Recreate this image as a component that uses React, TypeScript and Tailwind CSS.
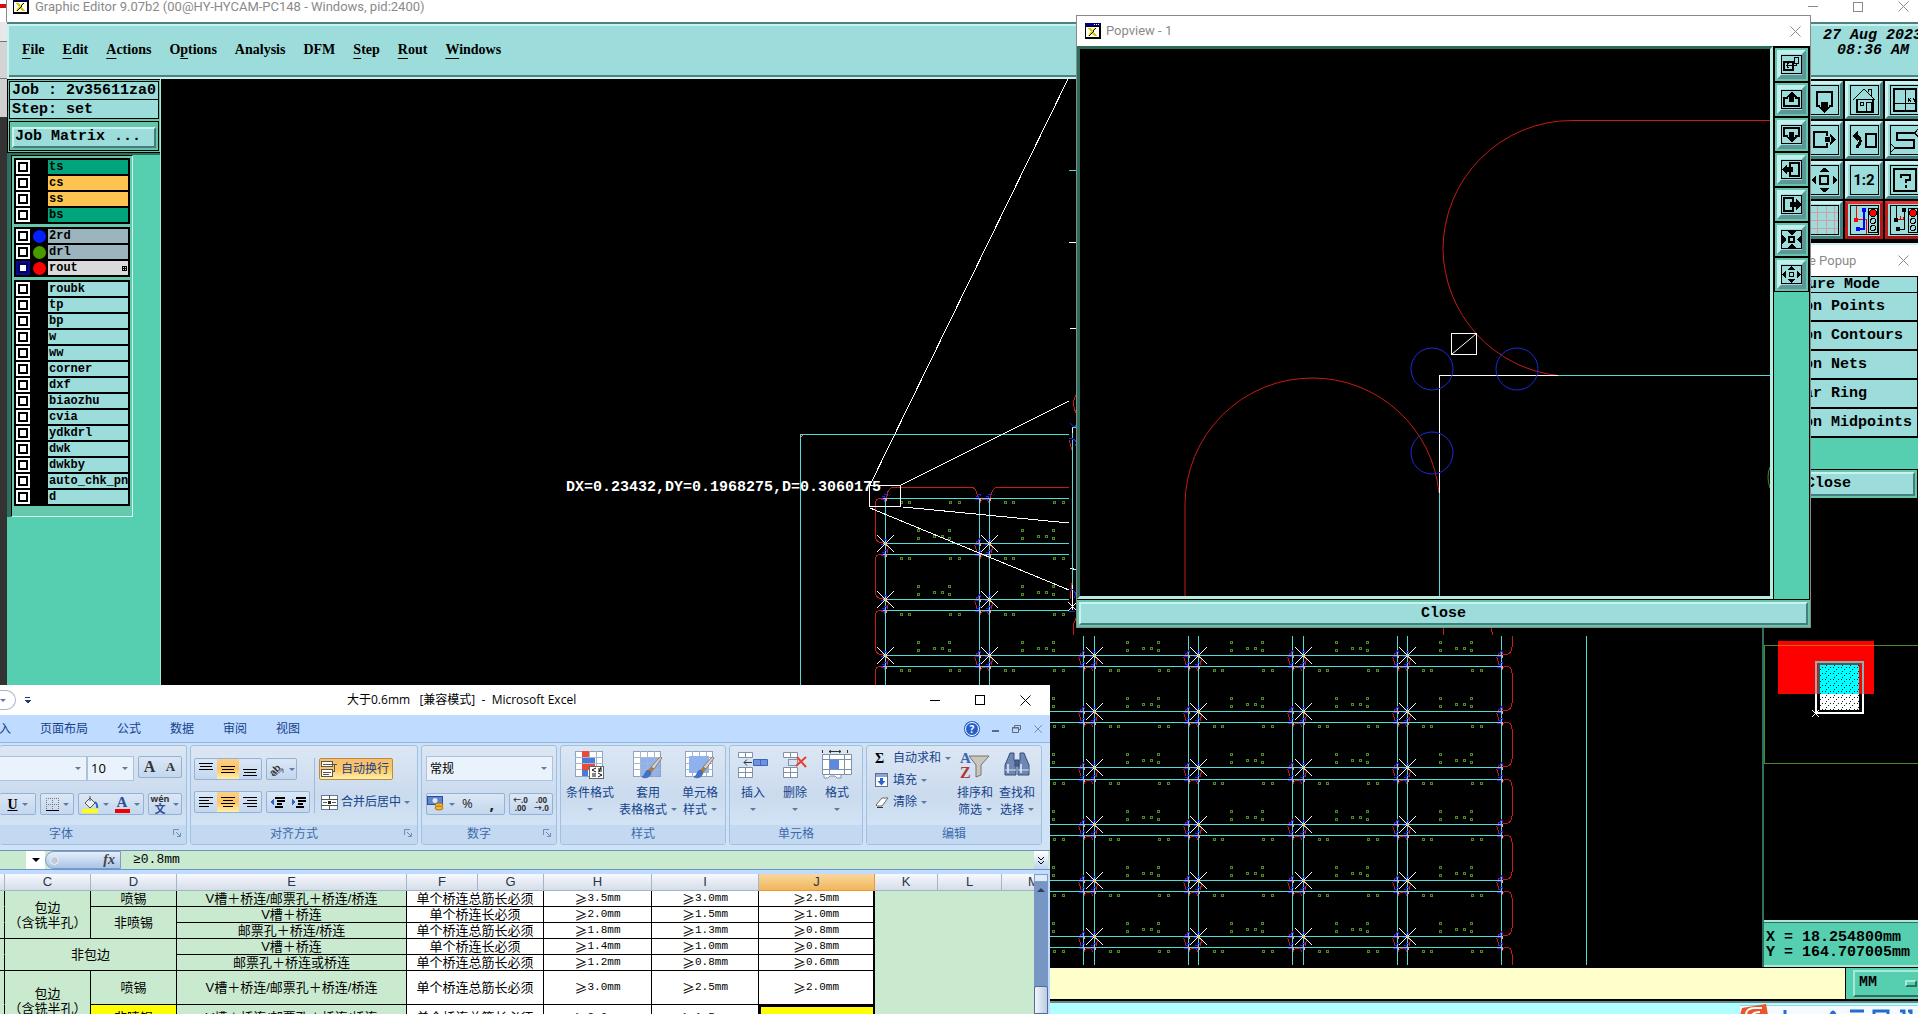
import React, { useState } from 'react';

const MONO = "font-['Liberation_Mono','Noto_Sans_CJK_SC',monospace]";
const UI = "font-['Open_Sans','Noto_Sans_CJK_SC',sans-serif]";
const TITLE = "font-['Roboto','Noto_Sans_CJK_SC',sans-serif]";

/* ---------------------------------------------------------------- data */

const menus = [
  { label: 'File', key: 0 },
  { label: 'Edit', key: 0 },
  { label: 'Actions', key: 0 },
  { label: 'Options', key: 1 },
  { label: 'Analysis', key: -1 },
  { label: 'DFM', key: -1 },
  { label: 'Step', key: 0 },
  { label: 'Rout', key: 0 },
  { label: 'Windows', key: 0 },
];

type Layer = { name: string; bg: string; dot?: string; active?: boolean };

const layerGroups: Layer[][] = [
  [
    { name: 'ts', bg: 'bg-[#00a57d]' },
    { name: 'cs', bg: 'bg-[#fdc54f]' },
    { name: 'ss', bg: 'bg-[#fdc54f]' },
    { name: 'bs', bg: 'bg-[#00a57d]' },
  ],
  [
    { name: '2rd', bg: 'bg-[#9cb4bd]', dot: 'bg-[#0020ff]' },
    { name: 'drl', bg: 'bg-[#9cb4bd]', dot: 'bg-[#479a00]' },
    { name: 'rout', bg: 'bg-[#dadada]', dot: 'bg-[#ff0000]', active: true },
  ],
  ['roubk', 'tp', 'bp', 'w', 'ww', 'corner', 'dxf', 'biaozhu', 'cvia', 'ydkdrl', 'dwk', 'dwkby', 'auto_chk_pnl', 'd'].map(
    (name) => ({ name, bg: 'bg-[#9cdcda]' })
  ),
];

/* ---------------------------------------------------------------- canvas */

const colX = [885, 989, 1094, 1198, 1303, 1407];
const rowY = [0, 1, 2, 3, 4, 5, 6, 7, 8].map((k) => Math.floor(498.5 + 56.1 * k));
const pads = [
  [15, 4], [23, 4], [64, 4], [73, 4],
  [32, 32], [32, 40], [48, 38], [56, 38], [63, 32], [63, 40],
];

const Corner: React.FC<{ x: number; y: number }> = ({ x, y }) => (
  <g>
    <path d={`M${x - 3} ${y - 2}h2v3M${x + 1} ${y - 2}v-2h-2M${x - 4} ${y + 1}h4`} stroke="#2020ff" />
    <path d={`M${x - 2} ${y}h3v3`} stroke="#f2a0a0" />
  </g>
);

const Panel: React.FC = () => (
  <g fill="none" strokeWidth="1">
    {rowY.map((y) => (
      <g key={y}>
        <path d={`M885 ${y}.5H1501`} stroke="#4fdcd9" />
        {y < 940 && <path d={`M885 ${y + 45}.5H1501`} stroke="#4fdcd9" />}
        {/* rounded rout on both sides of the array */}
        <path d={`M885 ${y + 4}c-1-6-10-5-10 3v30c0 8 8 9 10 6`} stroke="#c41c18" />
        <path d={`M1502 ${y + 4}c1-6 10-5 10 3v30c0 8-8 9-10 6`} stroke="#c41c18" />
      </g>
    ))}
    {colX.map((x) => (
      <g key={x}>
        <path d={`M${x}.5 498V965M${x + 94}.5 498V965`} stroke="#4fdcd9" />
        <path d={`M${x + 2} 498c-1-6 3-11 8-11h75c5 0 8 5 7 11`} stroke="#c41c18" />
        {rowY.map((y) => (
          <g key={y}>
            {pads.map(([dx, dy]) =>
              y + dy < 960 ? <rect key={`${dx}-${dy}`} x={x + dx} y={y + dy - 1} width="2" height="2" stroke="#4d8a25" /> : null
            )}
            <Corner x={x} y={y} />
            <Corner x={x + 94} y={y} />
            {x < 1400 && <path d={`M${x + 95} ${y + 5}c2-5 7-5 9 0`} stroke="#c41c18" />}
            {y < 940 && (
              <>
                <path d={`M${x + 93} ${y + 46}c-7 0 0 4-2 8M${x + 1} ${y + 46}c4 2 2 6 1 9M${x + 95} ${y + 40}c-1 4-4 4-4 5`} stroke="#c41c18" />
                <Corner x={x} y={y + 45} />
                <Corner x={x + 94} y={y + 45} />
                <path d={`M${x - 8} ${y + 37}l17 17M${x + 9} ${y + 37}l-17 17`} stroke="#fff" />
                <rect x={x} y={y + 45} width="1" height="1" stroke="#ffd24a" />
              </>
            )}
          </g>
        ))}
      </g>
    ))}
  </g>
);

const BoardCanvas: React.FC = () => (
  <svg className="absolute inset-0 w-full h-full" shapeRendering="crispEdges">
    <defs>
      <clipPath id="redrawn">
        <path d="M161 79H1069V636H1763V965H161Z" />
      </clipPath>
    </defs>
    <g transform="translate(-161 -79)" fill="none">
      <g clipPath="url(#redrawn)">
        <path d="M800.500 686V434.500H1586.500V965" stroke="#4fdcd9" />
        <path d="M800 438l4-4" stroke="#ff7a6a" />
        <Panel />
      </g>
      {/* measuring rubber band */}
      <g stroke="#fff">
        <path d="M870 485L1068 79M901 485L1069 401M903 507L1069 523M870 508L1069 590" />
        <rect x="869.500" y="485.500" width="31" height="21" />
        <path d="M1070 568l7 2M1069 243l7-1M1070 328h6M1072.500 427V433M1072.500 585V610M1068 602l9 9M1077 602l-9 9" />
      </g>
      <path d="M1072.500 433V585M1069 170.500h7M1072 427.500h4" stroke="#4fdcd9" />
      <path d="M1076 395q-5 8 0 18M1069 440l3 10M1072 583l-2 16M1076 618q-4 8-2 17M1443 628v7M1491 628l2 7" stroke="#c41c18" />
      <path d="M1070 423q5 6 6 2M1069 438q10 2 6 8M1070 588q8 4 4 10M1069 611h6" stroke="#1c2be0" />
      <text
        x="566"
        y="491"
        fill="#fff"
        fontWeight="700"
        fontSize="15"
        className={MONO}
      >
        DX=0.23432,DY=0.1968275,D=0.3060175
      </text>
    </g>
  </svg>
);

/* ---------------------------------------------------------------- tool icons */

const icons: Record<string, React.ReactNode> = {
  panes: (
    <>
      <rect x="3" y="7" width="9" height="8" strokeWidth="2" />
      <path d="M5 10.500h9M7.500 8l-2 2.500 2 2.500M13.500 2.500h4v6h-4zM12 10.500h3v-2" />
    </>
  ),
  up: (
    <>
      <path d="M7 8H3v8h15V8h-4" strokeWidth="2" />
      <path d="M5 7h11l-5-5h-1zM8 7h5v5H8z" fill="#000" stroke="none" />
    </>
  ),
  down: (
    <>
      <path d="M7 11H3V3h15v8h-4" strokeWidth="2" />
      <path d="M5 12h11l-5 5h-1zM8 7h5v5H8z" fill="#000" stroke="none" />
    </>
  ),
  left: (
    <>
      <path d="M9 7V3h9v13H9v-4" strokeWidth="2" />
      <path d="M6 4v11L1 10V9zM6 7h6v5H6z" fill="#000" stroke="none" />
    </>
  ),
  right: (
    <>
      <path d="M12 7V3H3v13h9v-4" strokeWidth="2" />
      <path d="M15 4v11l5-5V9zM9 7h6v5H9z" fill="#000" stroke="none" />
    </>
  ),
  shrink: (
    <>
      <rect x="8" y="7" width="5" height="5" strokeWidth="2" />
      <path d="M6 1h9l-4 4h-1zM6 18h9l-4-4h-1zM1 5v9l4-4V9zM20 5v9l-4-4V9z" fill="#000" stroke="none" />
    </>
  ),
  grow: (
    <>
      <rect x="8.500" y="7.500" width="4" height="4" />
      <path d="M7 5h7l-3-4h-1zM7 14h7l-3 4h-1zM5 6v7l-4-3V9zM16 6v7l4-3V9z" fill="#000" stroke="none" />
    </>
  ),
};

const light = (x: number) => (
  <>
    <rect x={x + 0.5} y="3.500" width="9" height="24" />
    <circle cx={x + 5} cy="8" r="3.500" fill="#f00" />
    <circle cx={x + 5} cy="16" r="2.500" />
    <circle cx={x + 5} cy="23" r="2.500" />
  </>
);

const bigIcons: Record<string, React.ReactNode> = {
  down: (
    <>
      <path d="M10 21H7V7h15v14h-3" strokeWidth="2" />
      <path d="M9 22h11l-5 6h-1zM11 17h7v5h-7z" fill="#000" stroke="none" />
    </>
  ),
  house: (
    <>
      <path d="M3 15L14 4l11 11M18.500 7V4h3v7M20 1l3-2" />
      <path d="M6 14.500h18M10.500 17.500h3v3h-3zM16.500 17.500h5v9h-5z" />
      <path d="M7 14v13h16V14" strokeWidth="2" />
    </>
  ),
  xy: (
    <>
      <rect x="4" y="4" width="22" height="22" strokeWidth="2" />
      <path d="M15.500 4v22M4 18.500h22M18 13l3 4M21 13l-3 4M23 13l1.500 2 1.500-2M24.500 15v2" />
    </>
  ),
  right: (
    <>
      <path d="M17 11V7H4v15h13v-4" strokeWidth="2" />
      <path d="M20 9v11l6-5v-1zM15 12h6v5h-6z" fill="#000" stroke="none" />
    </>
  ),
  undo: (
    <>
      <rect x="16" y="9" width="10" height="13" strokeWidth="2" />
      <path d="M4 11h3q6 4 1 10H6" strokeWidth="3" />
      <path d="M2 11l6-5v10z" fill="#000" stroke="none" />
    </>
  ),
  snake: (
    <>
      <path d="M25 8H7v7h17v8H5" strokeWidth="2" />
      <path d="M28 4l-3 4 3 4M1 19l4 4-4 4" />
    </>
  ),
  pan: (
    <>
      <rect x="10" y="11" width="8" height="8" strokeWidth="2" />
      <path d="M9 7h11l-5-4h-1zM9 23h11l-5 4h-1zM6 10v10l-4-5zM23 10v10l4-5z" fill="#000" stroke="none" />
    </>
  ),
  help: (
    <>
      <rect x="4" y="4" width="22" height="22" strokeWidth="2" />
      <path d="M11 13v-3h9v5h-4v3M16 20v3" strokeWidth="2" />
    </>
  ),
  grid: <path d="M7.500 1v28M16.500 1v28M24.500 1v28M1 7.500h27M1 15.500h27M1 23.500h27" stroke="#d99aa0" />,
  netRed: (
    <>
      <path d="M6.500 1v14M6 14.500h10V29" stroke="#f00" />
      <path d="M14 6v18H8" stroke="#00f" strokeWidth="2" />
      <circle cx="6" cy="15" r="2" fill="#f00" stroke="#f00" />
      <circle cx="14" cy="5" r="2" fill="#00f" stroke="#00f" />
      <circle cx="8" cy="24" r="2" fill="#00f" stroke="#00f" />
      {light(18)}
    </>
  ),
  netBlack: (
    <>
      <path d="M6.500 1v14M14.500 6v18H8" />
      <path d="M8 14.500h5v-3M10.500 14v-3" stroke="#d00" />
      <circle cx="6" cy="15" r="2" fill="#000" />
      <circle cx="14" cy="5" r="2" fill="#000" />
      <circle cx="8" cy="24" r="2" fill="#000" />
      {light(18)}
    </>
  ),
};

const bevel = 'border-2 border-t-[#c8f3f1] border-l-[#c8f3f1] border-b-[#447f80] border-r-[#447f80] bg-[#9cdcda]';

const SmallTool: React.FC<{ icon: string }> = ({ icon }) => (
  <div className="h-[33px] bg-[#66c4ab] p-[2px]">
    <button aria-label={icon} className="w-full h-full border-4 border-t-[#c0f0ee] border-l-[#c0f0ee] border-b-[#5d9698] border-r-[#5d9698] bg-[#9cdcda] flex items-center justify-center">
      <svg width="21" height="19" viewBox="0 0 21 19" fill="none" stroke="#000" shapeRendering="crispEdges" className="shrink-0">
        <rect x="0.500" y="0.500" width="20" height="18" />
        {icons[icon]}
      </svg>
    </button>
  </div>
);

const BigTool: React.FC<{ icon: string }> = ({ icon }) => {
  const red = icon.startsWith('net');
  return (
    <button
      aria-label={icon}
      className={`w-[38px] h-[38px] shrink-0 border-[3px] flex items-center justify-center bg-[#9cdcda] ${
        red ? 'border-t-[#e23434] border-l-[#c01c1c] border-b-[#a81414] border-r-[#b01818]' : 'border-t-[#c8f3f1] border-l-[#c8f3f1] border-b-[#447f80] border-r-[#447f80]'
      }`}
    >
      {icon === 'ratio' ? (
        <span className="w-[29px] h-[30px] border border-black flex items-center justify-center font-['Roboto',sans-serif] font-bold text-[15px]">1:2</span>
      ) : (
        <svg width="29" height="30" viewBox="0 0 29 30" fill="none" stroke="#000" shapeRendering="crispEdges" className="shrink-0">
          <rect x="0.500" y="0.500" width="28" height="29" />
          {bigIcons[icon]}
        </svg>
      )}
    </button>
  );
};

const XIcon: React.FC = () => (
  <svg width="16" height="16" viewBox="0 0 16 16" className="shrink-0" shapeRendering="crispEdges">
    <rect width="16" height="16" fill="#000" />
    <rect x="1" y="4" width="13" height="10" fill="#fff" />
    <rect x="0" y="0" width="15" height="3" fill="#000080" />
    <path d="M9 1.500h1M11 1.500h1M13 1.500h1" stroke="#fff" />
    <path d="M4 5l7 8" stroke="#d8c800" strokeWidth="2" />
    <path d="M11 5l-7 8" stroke="#111" />
    <path d="M10 5l-7 8" stroke="#e8e000" />
  </svg>
);

const Cross: React.FC<{ size?: number; color?: string }> = ({ size = 11, color = '#8a8a8a' }) => (
  <svg width={size} height={size} viewBox="0 0 11 11" stroke={color} fill="none">
    <path d="M0.500 0.500l10 10M10.500 0.500l-10 10" />
  </svg>
);

/* ---------------------------------------------------------------- side bar */

const LayerRow: React.FC<{ layer: Layer }> = ({ layer }) => (
  <label className="flex h-[14px]">
    <input
      type="checkbox"
      aria-label={layer.name}
      className={`appearance-none w-[14px] h-[14px] shrink-0 border-2 bg-white ${
        layer.active ? 'border-[#0a0a90] shadow-[inset_0_0_0_2px_#00006a]' : 'border-white shadow-[inset_0_0_0_2px_#000]'
      }`}
    />
    <span className="w-[18px] shrink-0 flex items-center justify-center">
      {layer.dot && <span className={`w-[13px] h-[13px] rounded-full ${layer.dot}`} />}
    </span>
    <span className={`flex-1 min-w-0 overflow-hidden flex justify-between items-center px-px text-[12px] leading-[14px] font-bold ${layer.bg}`}>
      {layer.name}
      {layer.active && (
        <svg width="5" height="5" viewBox="0 0 5 5" shapeRendering="crispEdges">
          <path d="M0.500 0.500h4v4h-4zM2.500 0v5M0 2.500h5" stroke="#000" fill="none" />
        </svg>
      )}
    </span>
  </label>
);

const SideBar: React.FC = () => (
  <aside className={`w-[154px] shrink-0 bg-[#56cfb0] border-r border-[#a8e8d8] ${MONO}`}>
    <div className="bg-[#66c4ab] border-y border-l border-black p-px flex flex-col gap-[2px]">
      <div className="border border-black bg-[#9cdcda] text-[15px] font-bold">
        <div className="h-[18px] leading-[18px] px-[2px] border-b border-black whitespace-nowrap">Job : 2v35611za0</div>
        <div className="h-[18px] leading-[19px] px-[2px]">Step: set</div>
      </div>
      <div className="border border-black p-[2px]">
        <button className={`w-full h-[21px] text-left leading-4 px-[1px] text-[15px] font-bold ${bevel}`}>Job Matrix ...</button>
      </div>
    </div>
    <div className="border-l-4 border-t-2 border-[#2c7060] pr-[27px]">
      <div className="border border-black border-r-[#c8fff0] border-b-[#c8fff0] bg-[#66c9ae] p-[2px] pb-[10px] flex flex-col gap-[3px]">
        {layerGroups.map((group, i) => (
          <div key={i} className="bg-black p-[2px] flex flex-col gap-[2px]">
            {group.map((layer) => (
              <LayerRow key={layer.name} layer={layer} />
            ))}
          </div>
        ))}
      </div>
    </div>
  </aside>
);

/* ---------------------------------------------------------------- right column */

const Overview: React.FC = () => (
  <svg className="w-full flex-1 min-h-0" shapeRendering="crispEdges">
    <defs>
      <pattern id="dots" width="8" height="6" patternUnits="userSpaceOnUse">
        <path d="M1 1.500h1M4 3.500h1M6 1.500h1M2 5.500h1" stroke="#023" />
      </pattern>
    </defs>
    <g transform="translate(-1764 -245)" fill="none">
      <rect x="1764.500" y="645.500" width="200" height="118" stroke="#4d8a25" />
      <rect x="1778" y="641" width="96" height="53" fill="#f00" />
      <path d="M1778 645.500h96" stroke="#c56a10" />
      <rect x="1816" y="662" width="47" height="51" stroke="#fff" strokeWidth="2" />
      <path d="M1816 694V662H1863V694" stroke="#8fb0b0" strokeWidth="2" />
      <path d="M1818 664h43M1818.500 664v30" stroke="#555" strokeWidth="2" />
      <rect x="1820" y="665" width="39" height="29" fill="#0ff" />
      <rect x="1820" y="694" width="39" height="16" fill="#fff" />
      <rect x="1820" y="665" width="39" height="45" fill="url(#dots)" />
      <path d="M1812 710l7 7M1819 710l-7 7" stroke="#fff" />
    </g>
  </svg>
);

const tools = ['down', 'house', 'xy', 'right', 'undo', 'snake', 'pan', 'ratio', 'help', 'grid', 'netRed', 'netBlack'];

const RightPanel: React.FC = () => (
  <aside className={`w-[156px] shrink-0 overflow-hidden bg-black border-l-2 border-[#2c7060] flex flex-col ${MONO}`}>
    <div className="h-[166px] pt-[2px] pl-[41px] border-b-2 border-[#c8f3f1]">
      <div className="w-[118px] grid grid-cols-3 gap-[2px]">
        {tools.map((t) => (
          <BigTool key={t} icon={t} />
        ))}
      </div>
    </div>
    <Overview />
    <div className="h-[47px] shrink-0 border-t-2 border-b-2 border-[#a8e8d8] bg-[#56cfb0] shadow-[inset_0_1px_0_#2c7060] pt-2 pl-[2px] text-[15px] leading-[15px] font-bold whitespace-pre">
      <div>X = 18.254800mm</div>
      <div>Y = 164.707005mm</div>
    </div>
  </aside>
);

/* ---------------------------------------------------------------- popups */

const FeaturePopup: React.FC = () => (
  <section className={`absolute left-[1800px] right-0 top-[245px] bg-[#56cfb0] ${MONO} text-[15px] font-bold`}>
    <header className={`h-[31px] bg-white flex items-center justify-between pl-[9px] pr-[9px] text-[13px] font-normal text-[#8a8a8a] ${TITLE}`}>
      <span>e Popup</span>
      <button aria-label="Close popup">
        <Cross />
      </button>
    </header>
    <h2 className="h-[17px] leading-[15px] border border-black bg-[#9cdcda] pl-[7px] whitespace-nowrap">ure Mode</h2>
    {['on Points', 'on Contours', 'on Nets', 'ar Ring', 'on Midpoints'].map((t) => (
      <button key={t} className="block w-full h-[29px] text-left pl-[3px] pt-px bg-[#9cdcda] border-b-2 border-x border-black whitespace-nowrap">
        {t}
      </button>
    ))}
    <div className="mt-[31px] border border-black bg-[#66c4ab] p-[2px]">
      <button className={`w-full h-6 leading-5 text-left pl-[1px] ${bevel}`}>Close</button>
    </div>
  </section>
);

const Popview: React.FC = () => (
  <section className="absolute left-[1076px] top-[15px] w-[735px] h-[613px] border border-[#8a8a8a] bg-[#66c4ab] flex flex-col">
    <header className={`h-[30px] shrink-0 bg-white flex items-center gap-[5px] pl-2 pr-[9px] text-[13px] text-[#8a8a8a] ${TITLE}`}>
      <XIcon />
      <span className="flex-1">Popview - 1</span>
      <button aria-label="Close window">
        <Cross />
      </button>
    </header>
    <div className="flex-1 min-h-0 flex bg-black">
      <div className="relative flex-1 min-w-0 bg-black border-l-[3px] border-t-[3px] border-[#2c6a5c] border-r-[3px] border-r-[#b8ecdf] border-b-[3px] border-b-[#b8ecdf]">
        <svg className="absolute inset-0 w-full h-full">
          <g transform="translate(-1080 -49)" fill="none">
            <path d="M1770 120.500H1572A129 129 0 0 0 1443 249.500A129 129 0 0 0 1558 375.500" stroke="#c41c18" />
            <path d="M1185 596V505A127 127 0 0 1 1312 378A127 127 0 0 1 1439 493" stroke="#c41c18" />
            <g shapeRendering="crispEdges">
              <path d="M1439.500 493V597M1558 375.500H1770" stroke="#4fdcd9" />
              <path d="M1439.500 493V375.500H1558" stroke="#fff" />
              <rect x="1451.500" y="333.500" width="25" height="21" stroke="#fff" />
            </g>
            <path d="M1452 354l24-20" stroke="#fff" />
            <g stroke="#1c2bd8">
              <circle cx="1432" cy="369" r="21" />
              <circle cx="1517" cy="369" r="21" />
              <circle cx="1432" cy="453" r="21" />
            </g>
            <path d="M1770 467q-4 10 0 21" stroke="#4d8a25" />
          </g>
        </svg>
      </div>
      <div className="w-9 shrink-0 ml-[1px] bg-[#56cfb0] border-r border-black">
        <div className="bg-black flex flex-col gap-[2px] pt-[2px] pb-[1px] px-[1px]">
          {['panes', 'up', 'down', 'left', 'right', 'shrink', 'grow'].map((t) => (
            <SmallTool key={t} icon={t} />
          ))}
        </div>
      </div>
    </div>
    <div className="shrink-0 border-t border-black p-[2px] bg-[#66c4ab]">
      <button className={`block w-full h-[23px] leading-5 text-[15px] font-bold ${MONO} ${bevel}`}>Close</button>
    </div>
  </section>
);

/* ---------------------------------------------------------------- excel */

const Caret: React.FC = () => <span className="inline-block shrink-0 border-x-[3px] border-x-transparent border-t-[3px] border-t-[#5b7ba8]" />;

const RibbonGroup: React.FC<{ title: string; className: string; launcher?: boolean; children: React.ReactNode }> = ({ title, className, launcher, children }) => (
  <section className={`h-[100px] shrink-0 border border-[#a3bfdf] rounded-[3px] bg-gradient-to-b from-[#dce7f4] via-[#cbdbee] to-[#d6e8fa] flex flex-col overflow-hidden ${className}`}>
    <div className="flex-1 min-h-0">{children}</div>
    <h3 className="relative h-[19px] bg-[#c2d9f1] text-center text-[12px] leading-[18px] text-[#3e6aaa] font-normal">
      {title}
      {launcher && (
        <svg className="absolute right-1 top-1" width="9" height="9" viewBox="0 0 9 9" fill="none" stroke="#6f8db5">
          <path d="M0.500 6V0.500H6M3 3l4 4M7.500 4v3.500H4" />
        </svg>
      )}
    </h3>
  </section>
);

const Seg: React.FC<{ className?: string; children: React.ReactNode }> = ({ className = '', children }) => (
  <div className={`h-[22px] shrink-0 flex items-stretch border border-[#94b1d8] rounded-[2px] bg-gradient-to-b from-[#dbe7f5] to-[#c4d7ee] ${className}`}>{children}</div>
);

const SegBtn: React.FC<{ label: string; on?: boolean; children: React.ReactNode }> = ({ label, on, children }) => (
  <button
    aria-label={label}
    className={`flex-1 flex items-center justify-center gap-1 ${on ? 'bg-gradient-to-b from-[#fbd08a] via-[#fdc55f] to-[#fff0a8]' : ''}`}
  >
    {children}
  </button>
);

const Lines: React.FC<{ d: string }> = ({ d }) => (
  <svg width="15" height="13" viewBox="0 0 15 13" stroke="#000" fill="none" shapeRendering="crispEdges">
    <path d={d} />
  </svg>
);

const alignTop = 'M0 0.500h14M1 3.500h12M0 6.500h14';
const alignMid = 'M0 3.500h14M1 6.500h12M0 9.500h14';
const alignBot = 'M0 6.500h14M1 9.500h12M0 12.500h14';
const alignLeft = 'M0 1.500h14M0 4.500h10M0 7.500h14M0 10.500h10';
const alignCenter = 'M0 1.500h14M2 4.500h10M0 7.500h14M2 10.500h10';
const alignRight = 'M0 1.500h14M4 4.500h10M0 7.500h14M4 10.500h10';

const Indent: React.FC<{ dir: number }> = ({ dir }) => (
  <svg width="16" height="13" viewBox="0 0 16 13" fill="none" shapeRendering="crispEdges">
    <path d="M5 1.500h10M7 4.500h8M7 7.500h5M5 10.500h8" stroke="#000" strokeWidth="2" />
    <path d={dir < 0 ? 'M4 3L0 6l4 3z' : 'M1 3l4 3-4 3z'} fill="#2f62c0" />
  </svg>
);

const Sheet: React.FC<{ fill?: string; children?: React.ReactNode }> = ({ fill, children }) => (
  <svg width="32" height="30" viewBox="0 0 32 30" fill="none">
    <rect x="1.500" y="1.500" width="27" height="25" fill="#fff" stroke="#8ea3c2" />
    {fill && <rect x="8" y="7" width="20" height="19" fill={fill} />}
    <path d="M1 7.500h28M1 13.500h28M1 19.500h28M8.500 1v26M15.500 1v26M22.500 1v26" stroke="#a5b6cf" />
    {children}
  </svg>
);

const brush = (
  <g>
    <path d="M30 8l-8 11-3-2 8-9q2-2 3 0z" fill="#d8d0c4" stroke="#7a6a58" strokeWidth="0.800" />
    <path d="M22 19l-3-2-3 3 3 3z" fill="#b07a3c" />
    <path d="M19 23l-3-3c-3 1-3 6-6 7 4 2 8 0 9-4z" fill="#3f74c8" stroke="#2a4f94" strokeWidth="0.600" />
  </g>
);

const BigCmd: React.FC<{ icon: React.ReactNode; lines: string[]; inline?: boolean; className: string }> = ({ icon, lines, inline, className }) => (
  <button className={`shrink-0 flex flex-col items-center text-[12px] leading-[17px] text-[#15428b] whitespace-nowrap ${className}`}>
    {icon}
    <span className="mt-[4px]">{lines[0]}</span>
    {inline ? (
      <span className="flex items-center gap-1">
        {lines[1]}
        <Caret />
      </span>
    ) : (
      <span className="h-[17px] flex items-center">
        <Caret />
      </span>
    )}
  </button>
);

const SmallCmd: React.FC<{ icon: React.ReactNode; text: string }> = ({ icon, text }) => (
  <button className="h-[22px] flex items-center text-[12px] text-[#15428b] whitespace-nowrap">
    <span className="w-[18px] flex items-center">{icon}</span>
    <span className="pr-1">{text}</span>
    <Caret />
  </button>
);

const Ribbon: React.FC = () => (
  <div className="flex gap-[3px] pt-[2px] pb-[5px] bg-[#d0e2f6] border-t border-[#8fb3e2]">
    <RibbonGroup title="字体" launcher className="w-[187px] border-l-0 [&>h3]:pr-16">
      <div className="flex pt-[10px]">
        <select aria-label="字体名称" className="appearance-none w-[87px] h-[25px] bg-[#eaf2fb] border border-[#abc1de] border-l-0" />
        <div className="relative -ml-3 w-3 flex items-center"><Caret /></div>
        <select aria-label="字号" className="appearance-none w-[47px] h-[25px] pl-[3px] bg-[#eaf2fb] border border-[#abc1de] text-[13px]">
          <option>10</option>
        </select>
        <div className="relative -ml-3 mr-1 w-3 flex items-center"><Caret /></div>
        <Seg className="w-11">
          <SegBtn label="增大字号"><span className="font-['Liberation_Serif',serif] font-bold text-[16px] text-[#333]">A</span></SegBtn>
          <SegBtn label="减小字号"><span className="font-['Liberation_Serif',serif] font-bold text-[13px] text-[#333]">A</span></SegBtn>
        </Seg>
      </div>
      <div className="flex gap-1 pt-[12px]">
        <Seg className="w-9 border-l-0">
          <SegBtn label="下划线"><span className="font-['Liberation_Serif',serif] font-bold text-[14px] underline">U</span><Caret /></SegBtn>
        </Seg>
        <Seg className="w-[34px]">
          <SegBtn label="边框">
            <svg width="13" height="13" viewBox="0 0 13 13" stroke="#777" fill="none" strokeDasharray="1 1" shapeRendering="crispEdges">
              <path d="M0 0.500h13M0 6.500h13M0.500 0v13M6.500 0v13M12.500 0v13" />
              <path d="M0 12.500h13" stroke="#000" strokeDasharray="none" />
            </svg>
            <Caret />
          </SegBtn>
        </Seg>
        <Seg className="w-[66px]">
          <SegBtn label="填充颜色">
            <svg width="17" height="17" viewBox="0 0 17 17">
              <path d="M3 7l5-5 5 5-5 5z" fill="#e8eef6" stroke="#555" />
              <path d="M8 5V0" stroke="#555" />
              <path d="M13 6q3 2 2 6" stroke="#2f62c0" strokeWidth="2" fill="none" />
              <rect y="13" width="16" height="4" fill="#ff0" />
            </svg>
            <Caret />
          </SegBtn>
          <SegBtn label="字体颜色">
            <span className="w-[15px] h-[17px] border-b-4 border-[#f00000] font-['Liberation_Serif',serif] font-bold text-[15px] leading-[13px] text-[#2a4f94]">A</span>
            <Caret />
          </SegBtn>
        </Seg>
        <Seg className="w-[34px]">
          <SegBtn label="拼音">
            <span className="flex flex-col items-center text-[9px] leading-[9px] font-bold text-[#333]">
              <span>wén</span>
              <span className="text-[11px] leading-[11px] text-[#2f4f9a]">文</span>
            </span>
            <Caret />
          </SegBtn>
        </Seg>
      </div>
    </RibbonGroup>

    <RibbonGroup title="对齐方式" launcher className="w-[228px] [&>h3]:pr-5">
      <div className="flex pt-3 pl-[3px]">
        <div className="flex flex-col gap-[11px] pr-1">
          <Seg className="w-[68px]">
            <SegBtn label="顶端对齐"><Lines d={alignTop} /></SegBtn>
            <SegBtn label="垂直居中" on><Lines d={alignMid} /></SegBtn>
            <SegBtn label="底端对齐"><Lines d={alignBot} /></SegBtn>
          </Seg>
          <Seg className="w-[68px]">
            <SegBtn label="左对齐"><Lines d={alignLeft} /></SegBtn>
            <SegBtn label="居中" on><Lines d={alignCenter} /></SegBtn>
            <SegBtn label="右对齐"><Lines d={alignRight} /></SegBtn>
          </Seg>
        </div>
        <div className="flex flex-col gap-[11px] pr-1 border-r border-[#9fb9dc]">
          <Seg className="w-[31px]">
            <SegBtn label="方向">
              <svg width="16" height="15" viewBox="0 0 16 15">
                <text x="1" y="11" fontSize="10" fontWeight="700" fill="#333" transform="rotate(-45 7 9)" className="font-['Liberation_Sans',sans-serif]">ab</text>
                <path d="M6 14l8-7M14 7v4M14 7h-4" stroke="#667" fill="none" />
              </svg>
              <Caret />
            </SegBtn>
          </Seg>
          <Seg className="w-11">
            <SegBtn label="减少缩进量"><Indent dir={-1} /></SegBtn>
            <SegBtn label="增加缩进量"><Indent dir={1} /></SegBtn>
          </Seg>
        </div>
        <div className="flex flex-col gap-[11px] pl-1 text-[12px] text-[#15428b]">
          <button className="w-[74px] h-[22px] flex items-center gap-[3px] pl-[1px] border border-[#c08a3a] rounded-[2px] bg-gradient-to-b from-[#f5be73] via-[#fdc55f] to-[#fff0a8] whitespace-nowrap">
            <svg width="17" height="16" viewBox="0 0 17 16" fill="none" shapeRendering="crispEdges" className="shrink-0">
              <rect x="0.500" y="0.500" width="11" height="5" fill="#fff" stroke="#555" />
              <rect x="0.500" y="8.500" width="11" height="7" fill="#fff" stroke="#555" />
              <path d="M2 3h14M2 11h8M2 13h6M13 3v7h-2" stroke="#555" />
            </svg>
            自动换行
          </button>
          <button className="h-[22px] flex items-center gap-[3px] pl-[2px] whitespace-nowrap">
            <svg width="17" height="15" viewBox="0 0 17 15" fill="none" shapeRendering="crispEdges" className="shrink-0">
              <rect x="0.500" y="0.500" width="16" height="14" fill="#fff" stroke="#667ba0" />
              <path d="M0 4.500h17M0 10.500h17M8.500 0v4M8.500 11v4M2 7.500h4M11 7.500h4" stroke="#555" />
              <rect x="7" y="6" width="3" height="3" fill="#222" />
            </svg>
            合并后居中
            <Caret />
          </button>
        </div>
      </div>
    </RibbonGroup>

    <RibbonGroup title="数字" launcher className="w-[136px] [&>h3]:pr-5">
      <div className="flex pt-[10px] pl-1">
        <select aria-label="数字格式" className="appearance-none w-[127px] h-[25px] pl-[3px] bg-[#eaf2fb] border border-[#abc1de] text-[12px]">
          <option>常规</option>
        </select>
        <div className="-ml-3 w-3 flex items-center"><Caret /></div>
      </div>
      <div className="flex gap-1 pt-[12px] pl-1">
        <Seg className="w-[79px]">
          <SegBtn label="会计数字格式">
            <svg width="18" height="16" viewBox="0 0 18 16" className="shrink-0">
              <rect x="0.500" y="0.500" width="15" height="8" fill="#5d86cf" stroke="#2a4f94" />
              <circle cx="8" cy="4.500" r="2.500" fill="#dbe7f5" />
              <ellipse cx="12" cy="9" rx="4" ry="2" fill="#f2b632" stroke="#a87410" />
              <ellipse cx="12" cy="12" rx="4" ry="2" fill="#f2b632" stroke="#a87410" />
            </svg>
            <Caret />
          </SegBtn>
          <SegBtn label="百分比"><span className="text-[13px] text-[#222]">%</span></SegBtn>
          <SegBtn label="千位分隔"><span className="text-[16px] leading-none font-bold text-[#222]">,</span></SegBtn>
        </Seg>
        <Seg className="w-[44px] font-bold text-[8px] leading-[8px] text-[#333]">
          <SegBtn label="增加小数位数"><span>←.0<br />.00</span></SegBtn>
          <SegBtn label="减少小数位数"><span>.00<br />→.0</span></SegBtn>
        </Seg>
      </div>
    </RibbonGroup>

    <RibbonGroup title="样式" className="w-[166px]">
      <div className="flex pt-1">
        <BigCmd
          className="w-[58px]"
          lines={['条件格式']}
          icon={
            <Sheet>
              <path d="M8 1h7v6H8zM8 14h13v6H8z" fill="#ea4a38" />
              <path d="M8 8h13v5H8zM8 20h6v6H8z" fill="#4a7ad8" />
              <rect x="15.500" y="16.500" width="14" height="12" fill="#fff" stroke="#666" />
              <path d="M22 18l-4 2 4 2M18 24h4M18 26h4M24 19h4M24 21h4M27 17l-2 5M24 23l4 2-4 2" stroke="#111" />
            </Sheet>
          }
        />
        <BigCmd className="w-[58px]" lines={['套用', '表格格式']} inline icon={<Sheet fill="#8fb2ef">{brush}</Sheet>} />
        <BigCmd
          className="w-[46px]"
          lines={['单元格', '样式']}
          inline
          icon={
            <Sheet>
              <rect x="5" y="6" width="20" height="17" fill="#8fb2ef" />
              {brush}
            </Sheet>
          }
        />
      </div>
    </RibbonGroup>

    <RibbonGroup title="单元格" className="w-[134px]">
      <div className="flex pt-1 pl-[2px]">
        <BigCmd
          className="w-[42px]"
          lines={['插入']}
          icon={
            <svg width="32" height="30" viewBox="0 0 32 30" fill="#fff" stroke="#8090a8">
              <path d="M1.500 2.500h14v5h-14zM8.500 2v5M1.500 17.500h14v10h-14zM8.500 17v11M1 22.500h15" />
              <path d="M16.500 9.500h14v6h-14z" fill="#6b93df" stroke="#3f66b5" />
              <path d="M23.500 10v6" stroke="#3f66b5" />
              <path d="M15 12.500H7M10 9.500l-3 3 3 3" stroke="#333" fill="none" />
            </svg>
          }
        />
        <BigCmd
          className="w-[42px]"
          lines={['删除']}
          icon={
            <svg width="32" height="30" viewBox="0 0 32 30" fill="#fff" stroke="#8090a8">
              <path d="M4.500 2.500h14v5h-14zM11.500 2v5M4.500 17.500h14v10h-14zM11.500 17v11M4 22.500h15" />
              <path d="M9.500 9.500h9v6h-9z" fill="none" stroke="#345" strokeDasharray="1 1" />
              <path d="M18 7l9 10M27 7l-10 9" stroke="#e8402c" strokeWidth="2" />
            </svg>
          }
        />
        <BigCmd
          className="w-[42px]"
          lines={['格式']}
          icon={
            <svg width="32" height="30" viewBox="0 0 32 30" fill="#fff" stroke="#8090a8">
              <path d="M1.500 4.500h29v20h-29zM1 9.500h30M1 19.500h30M8.500 4v20M23.500 4v20" />
              <path d="M9 10h9v9H9z" fill="#5d8ae0" stroke="none" />
              <path d="M3 25v3h4l2-2h5l2 2h4v-3" />
              <path d="M1.500 0v3M26.500 0v3M8 1.500h12M10 0l-2 1.500 2 1.500M18 0l2 1.500-2 1.500" stroke="#333" fill="none" />
            </svg>
          }
        />
      </div>
    </RibbonGroup>

    <RibbonGroup title="编辑" className="w-[176px]">
      <div className="flex pt-[1px] pl-2">
        <div className="w-[79px] shrink-0">
          <SmallCmd text="自动求和" icon={<span className="font-['Liberation_Serif',serif] font-bold text-[14px] text-black">Σ</span>} />
          <SmallCmd
            text="填充"
            icon={
              <svg width="13" height="14" viewBox="0 0 13 14">
                <rect x="0.500" y="0.500" width="12" height="13" fill="#fff" stroke="#5a6f96" />
                <rect x="1" y="1" width="11" height="3" fill="#8aa6d8" />
                <path d="M5 5h3v3h2.500L6.500 12.500 2.500 8H5z" fill="#2f62d0" />
              </svg>
            }
          />
          <SmallCmd
            text="清除"
            icon={
              <svg width="14" height="13" viewBox="0 0 14 13">
                <path d="M1 9l6-7h6l-6 8H2z" fill="#fff" stroke="#666" />
                <path d="M2 11.500h6" stroke="#333" />
              </svg>
            }
          />
        </div>
        <BigCmd
          className="w-[42px] pt-[3px]"
          lines={['排序和', '筛选']}
          inline
          icon={
            <svg width="32" height="30" viewBox="0 0 32 30">
              <text x="1" y="13" fontSize="15" fontWeight="700" fill="#3a66b0" className="font-['Liberation_Serif',serif]">A</text>
              <text x="1" y="28" fontSize="16" fontWeight="700" fill="#b03a34" className="font-['Liberation_Serif',serif]">Z</text>
              <path d="M10 6h20l-8 9v10l-5 2V15z" fill="#c9c6c0" stroke="#77736c" />
            </svg>
          }
        />
        <BigCmd
          className="w-[42px] pt-[3px]"
          lines={['查找和', '选择']}
          inline
          icon={
            <svg width="32" height="30" viewBox="0 0 32 30" fill="#6f87b3" stroke="#384e7a">
              <path d="M7 8l2-5h4v7l2 3v12H4V15zM25 8l-2-5h-4v7l-2 3v12h11V15z" />
              <rect x="14" y="10" width="4" height="6" fill="#4a6090" />
              <path d="M7 14v9M20 14v9" stroke="#c8d6ee" strokeWidth="2" />
              <path d="M4 20h11M17 20h11" stroke="#dbe4f4" />
            </svg>
          }
        />
      </div>
    </RibbonGroup>
  </div>
);

const cols = [
  { id: '', w: 'w-[5px]' },
  { id: 'C', w: 'w-[86px]' },
  { id: 'D', w: 'w-[86px]' },
  { id: 'E', w: 'w-[230px]' },
  { id: 'F', w: 'w-[71px]' },
  { id: 'G', w: 'w-[66px]' },
  { id: 'H', w: 'w-[108px]' },
  { id: 'I', w: 'w-[107px]' },
  { id: 'J', w: 'w-[116px]' },
  { id: 'K', w: 'w-[63px]' },
  { id: 'L', w: 'w-[64px]' },
  { id: 'M', w: 'w-[64px]' },
];

type SheetRow = { lead: { text: string; cols?: number; rows?: number; hot?: boolean }[]; e: string; f: string; v: string[]; h: string; hot?: boolean };

const rows: SheetRow[] = [
  { lead: [{ text: '包边\n（含铣半孔）', rows: 3 }, { text: '喷锡' }], e: 'V槽＋桥连/邮票孔＋桥连/桥连', f: '单个桥连总筋长必须', v: ['3.5', '3.0', '2.5'], h: 'h-4' },
  { lead: [{ text: '非喷锡', rows: 2 }], e: 'V槽＋桥连', f: '单个桥连长必须', v: ['2.0', '1.5', '1.0'], h: 'h-4' },
  { lead: [], e: '邮票孔＋桥连/桥连', f: '单个桥连总筋长必须', v: ['1.8', '1.3', '0.8'], h: 'h-4' },
  { lead: [{ text: '非包边', cols: 2, rows: 2 }], e: 'V槽＋桥连', f: '单个桥连长必须', v: ['1.4', '1.0', '0.8'], h: 'h-4' },
  { lead: [], e: '邮票孔＋桥连或桥连', f: '单个桥连总筋长必须', v: ['1.2', '0.8', '0.6'], h: 'h-4' },
  { lead: [{ text: '包边\n（含铣半孔）', rows: 2 }, { text: '喷锡' }], e: 'V槽＋桥连/邮票孔＋桥连/桥连', f: '单个桥连总筋长必须', v: ['3.0', '2.5', '2.0'], h: 'h-[34px]' },
  { lead: [{ text: '非喷锡', hot: true }], e: 'V槽＋桥连/邮票孔＋桥连/桥连', f: '单个桥连总筋长必须', v: ['2.0', '1.5', '0.8'], h: 'h-[26px]', hot: true },
];

const cell = 'p-0 border-b border-r border-black overflow-hidden whitespace-pre';

const Grid: React.FC = () => (
  <table className="w-[1066px] table-fixed border-separate border-spacing-0 text-[13px] leading-[15px] text-center font-['Liberation_Sans','Noto_Sans_CJK_SC',sans-serif]">
    <thead>
      <tr>
        {cols.map((c) => (
          <th
            key={c.id}
            className={`h-[17px] p-0 font-normal leading-[16px] text-[#27364d] border-b border-r ${c.w} ${
              c.id === 'J' ? 'bg-gradient-to-b from-[#f8d79b] to-[#f1b65a] border-[#f29536]' : 'bg-gradient-to-b from-[#f7f9fc] to-[#d6dde8] border-[#9eb6ce]'
            }`}
          >
            {c.id}
          </th>
        ))}
      </tr>
    </thead>
    <tbody>
      {rows.map((r, i) => (
        <tr key={i} className={r.h}>
          <td className={`${cell} ${i === 2 || i === 4 ? '' : 'border-b-transparent'}`} />
          {r.lead.map((l) => (
            <td key={l.text} colSpan={l.cols} rowSpan={l.rows} className={`${cell} ${l.hot ? 'bg-[#ffff00]' : ''}`}>
              {l.text}
            </td>
          ))}
          <td className={cell}>{r.e}</td>
          <td colSpan={2} className={`${cell} bg-white`}>{r.f}</td>
          {r.v.map((v, k) => (
            <td key={k} className={`${cell} ${k === 2 ? 'border-r-2' : ''} ${k === 2 && r.hot ? 'bg-[#ffff00] border-2' : 'bg-white'}`}>
              <span className="flex items-center justify-center leading-[15px]">
                <span className="font-['Noto_Sans_CJK_SC',sans-serif]">≥</span>
                <span className="font-['Liberation_Mono',monospace] text-[11px]">{v}mm</span>
              </span>
            </td>
          ))}
          <td colSpan={3} className="p-0" />
        </tr>
      ))}
    </tbody>
  </table>
);

const Excel: React.FC = () => {
  const [formula, setFormula] = useState('≥0.8mm');
  return (
    <section className={`absolute left-0 top-[685px] bottom-0 w-[1050px] overflow-hidden flex flex-col bg-[#bfdbff] text-black ${UI}`}>
      <header className="relative h-[30px] shrink-0 bg-white flex items-center">
        <div className="w-4 h-5 border border-l-0 border-[#aab4c4] rounded-r-full flex items-center"><Caret /></div>
        <svg className="ml-2" width="7" height="7" viewBox="0 0 7 7" shapeRendering="crispEdges">
          <path d="M1 0.500h5" stroke="#1c3c74" />
          <path d="M0 3h7l-3 4z" fill="#1c3c74" />
        </svg>
        <h1 className="flex-1 pl-[316px] text-[12px] whitespace-pre">大于0.6mm   [兼容模式]  -  Microsoft Excel</h1>
        <div className="flex items-center gap-[35px] pr-[19px]">
          <button aria-label="最小化" className="w-[10px] h-px bg-black" />
          <button aria-label="最大化" className="w-[10px] h-[10px] border border-black" />
          <button aria-label="关闭"><Cross color="#000" /></button>
        </div>
      </header>
      <nav className="h-[27px] shrink-0 flex items-center gap-[29px] text-[12px] text-[#15428b]">
        <button className="w-[11px] flex justify-end">入</button>
        {['页面布局', '公式', '数据', '审阅', '视图'].map((t) => (
          <button key={t}>{t}</button>
        ))}
        <div className="flex-1" />
        <div className="flex items-center gap-[13px] pr-2">
          <button aria-label="帮助" className="w-[14px] h-[14px] rounded-full bg-[#2460c8] border border-white text-white text-[10px] leading-[12px] font-bold ring-1 ring-[#2460c8]">?</button>
          <button aria-label="最小化工作簿" className="w-[7px] h-[2px] mt-1 bg-[#5f6b80]" />
          <svg width="9" height="8" viewBox="0 0 9 8" fill="none" stroke="#5f6b80"><path d="M2.500 2.500V0.500h6v4h-2M0.500 2.500h6v5h-6zM0 3h7" /></svg>
          <Cross size={8} color="#5f6b80" />
        </div>
      </nav>
      <Ribbon />
      <div className="h-5 shrink-0 mb-1 flex border-y border-[#6f93be] bg-[#c9eace] pr-[2px]">
        <span className="w-[26px]" />
        <button aria-label="名称框" className="w-[19px] bg-white flex items-center justify-center">
          <span className="border-x-4 border-x-transparent border-t-4 border-t-black" />
        </button>
        <div className="w-[76px] rounded-l-full border border-[#7f9cc4] bg-gradient-to-b from-[#e6effa] to-[#a9c4e8] flex items-center justify-between pl-1 pr-[5px]">
          <span className="w-[9px] h-[9px] rounded-full bg-[#c0cad8] border border-[#eef4fb]" />
          <i className="font-['Liberation_Serif',serif] font-bold text-[14px] leading-none text-[#444]">fx</i>
        </div>
        <input
          aria-label="编辑栏"
          value={formula}
          onChange={(e) => setFormula(e.target.value)}
          className={`flex-1 min-w-0 bg-transparent pl-3 text-[13px] outline-none ${MONO}`}
        />
        <button aria-label="展开编辑栏" className="w-[14px] bg-gradient-to-b from-white to-[#bcd2ee] flex items-center justify-center">
          <svg width="8" height="9" viewBox="0 0 8 9" fill="none" stroke="#000"><path d="M1 1l3 3 3-3M1 5l3 3 3-3" /></svg>
        </button>
      </div>
      <div className="flex-1 min-h-0 flex">
        <div className="flex-1 min-w-0 overflow-hidden bg-[#c9eace]">
          <Grid />
        </div>
        <div className="w-[14px] mr-[2px] shrink-0 bg-[#7896c4] flex flex-col items-center">
          <span className="w-full h-2 bg-[#dfeaf7] border border-[#7f9cc4]" />
          <span className="mt-[6px] border-x-4 border-x-transparent border-b-4 border-b-[#2a3f66]" />
          <span className="mt-[94px] w-full flex-1 bg-gradient-to-r from-[#f2f6fb] to-[#bccbe2] border border-[#4f6c9c] rounded-t-[2px]" />
        </div>
      </div>
    </section>
  );
};

/* ---------------------------------------------------------------- page */

const App: React.FC = () => (
  <div className="relative h-screen w-full overflow-hidden flex bg-black text-black">
    {/* sliver of the window behind */}
    <div className="w-[7px] shrink-0 flex flex-col bg-[#333]">
      <div className="h-[22px] bg-white border-r border-[#888] pt-1"><div className="h-1 bg-[#d01010]" /></div>
      <div className="h-[20px] bg-[#e8e8e8] border-b border-[#777]" />
      <div className="h-[37px] bg-[#d4d4d4] border-b border-[#777]" />
      <div className="h-[38px] bg-[#d0d0d0]" />
    </div>

    <div className="flex-1 min-w-0 flex flex-col">
      <header className={`h-[22px] shrink-0 bg-white flex items-start justify-between pl-[6px] pr-[9px] text-[13px] text-[#8a8a8a] ${TITLE}`}>
        <div className="flex items-start gap-[6px]">
          <span className="-mt-[2px]"><XIcon /></span>
          <span className="leading-[14px]">Graphic Editor 9.07b2 (00@HY-HYCAM-PC148 - Windows, pid:2400)</span>
        </div>
        <div className="flex items-center gap-[35px] pt-[1px]">
          <button aria-label="Minimize" className="w-[10px] h-px bg-[#8a8a8a]" />
          <button aria-label="Maximize" className="w-[10px] h-[10px] border border-[#8a8a8a]" />
          <button aria-label="Close editor"><Cross /></button>
        </div>
      </header>

      <div className="h-[57px] shrink-0 border-t-2 border-[#4f8080] bg-[#9cdcda] flex justify-between shadow-[inset_2px_2px_0_#c8f3f1,inset_0_-2px_0_#c8f3f1,inset_0_-4px_0_#4f8080]">
        <nav className="flex items-center gap-[18px] pl-[15px] pb-1 font-['Liberation_Serif',serif] font-bold text-[14px]">
          {menus.map((m) => (
            <button key={m.label} className="underline-offset-4">
              {m.key < 0 ? (
                m.label
              ) : (
                <>
                  {m.label.slice(0, m.key)}
                  <span className="underline">{m.label[m.key]}</span>
                  {m.label.slice(m.key + 1)}
                </>
              )}
            </button>
          ))}
        </nav>
        <div className={`w-[95px] pt-1 text-[15px] leading-[15px] font-bold italic whitespace-nowrap ${MONO}`}>
          <div>27 Aug 2023</div>
          <div className="pl-[14px]">08:36 AM</div>
        </div>
      </div>

      <div className="flex-1 min-h-0 flex">
        <SideBar />
        <main className="relative flex-1 min-w-0 bg-black overflow-hidden">
          <BoardCanvas />
        </main>
        <RightPanel />
      </div>

      <div className={`h-[34px] shrink-0 flex bg-black pt-px pb-[2px] ${MONO}`}>
        <div className="flex-1 bg-[#ffffcc]" />
        <div className="w-[72px] ml-[1px] bg-[#56cfb0] pl-[7px] py-[2px]">
          <button className="w-[80px] h-full border-2 border-[#a8e8d8] border-b-[#2c7060] bg-[#56cfb0] flex items-center gap-7 pl-1 text-[15px] font-bold">
            MM
            <span className="w-3 h-[7px] border-2 border-t-[#a8e8d8] border-l-[#a8e8d8] border-b-[#2c7060] border-r-[#2c7060]" />
          </button>
        </div>
      </div>
      <div className="h-[13px] shrink-0 border-t-2 border-[#6f8585] bg-[#b0ffff] flex justify-end items-end">
        <div className="w-[178px] h-[9px] flex bg-[#f4faff] border-t border-[#9ad0e8]">
          <svg width="178" height="11" viewBox="0 0 178 11" className="shrink-0 -mt-[2px]">
            <path d="M0 11L2 4 26 0l2 11z" fill="#e8562a" />
            <path d="M6 11q0-7 9-7h7M12 11q2-3 8-3" stroke="#fff" strokeWidth="2" fill="none" />
            <path d="M45 6v5M91 11q2-6 4 0M110 7h14M134 11V7h14v4M160 7h4v4M168 7h3v4" stroke="#1f6fd0" strokeWidth="3" fill="none" />
          </svg>
        </div>
      </div>
    </div>

    <FeaturePopup />
    <Popview />
    <Excel />
  </div>
);

export default App;
